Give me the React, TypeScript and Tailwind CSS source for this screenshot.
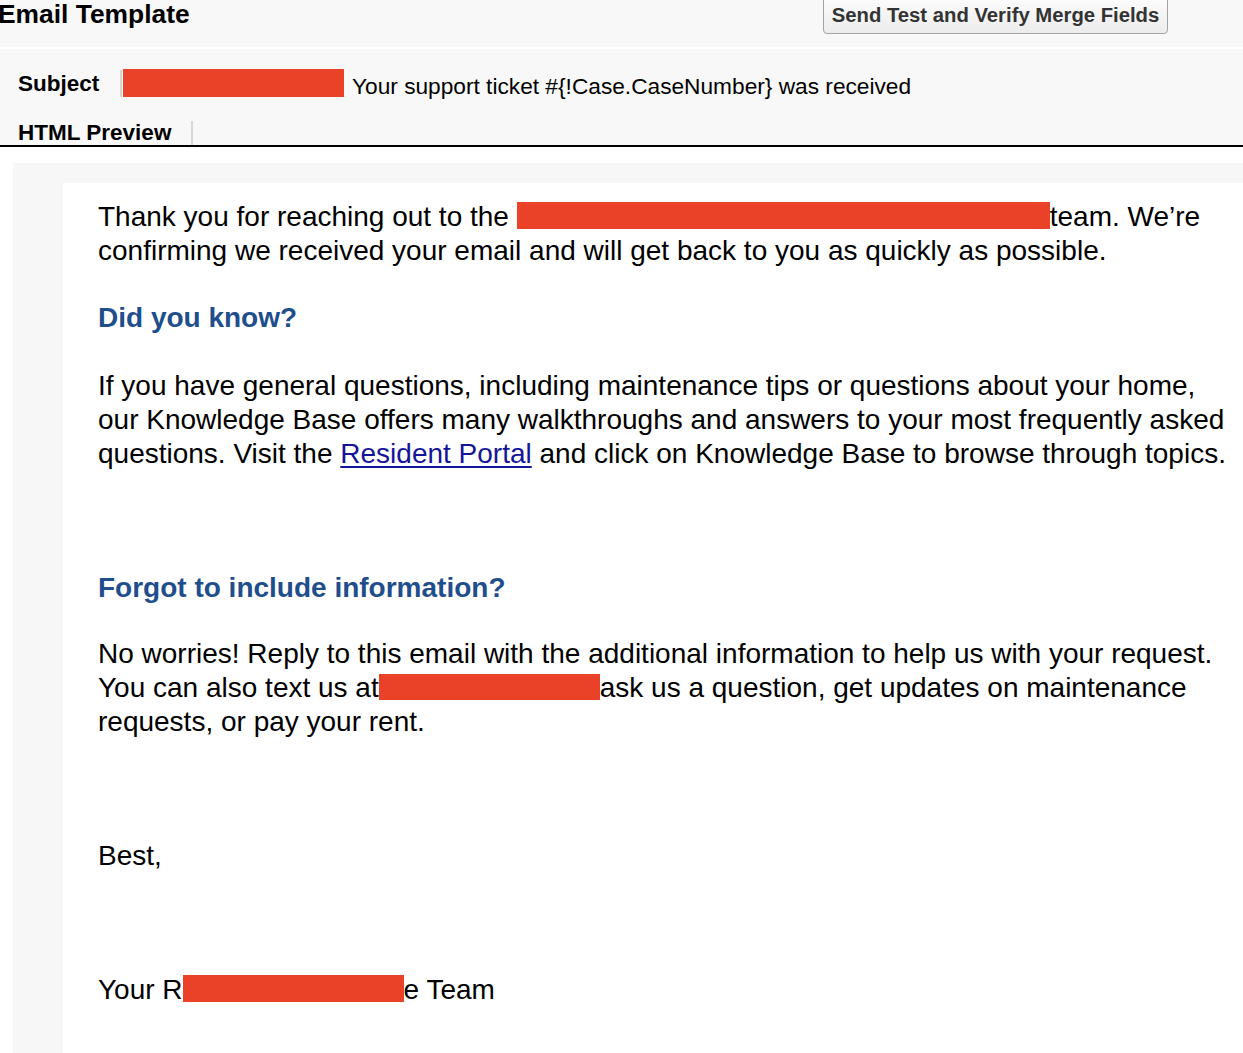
import React from "react";

function Red({ w, h = 27 }: { w: number; h?: number }) {
  return (
    <span
      className="inline-block bg-[#ea4129] align-[-3px]"
      style={{ width: w, height: h }}
    />
  );
}

export default function App() {
  return (
    <div
      className="w-[1243px] h-[1053px] overflow-hidden bg-white text-black"
      style={{ fontFamily: '"Liberation Sans", Arial, sans-serif' }}
    >
      {/* header */}
      <div className="h-[47px] bg-[#f8f8f8] flex items-start pt-[1px]">
        <div className="ml-[-2px] text-[26.4px] leading-[26px] font-bold text-black">
          Email Template
        </div>
        <button className="ml-auto mr-[75px] mt-[-9px] h-[42px] w-[345px] flex items-start justify-center pt-[12px] border border-[#a3a3a3] rounded-[4px] bg-gradient-to-b from-[#ffffff] to-[#ececec] text-[20.3px] leading-[20px] font-bold text-[#333333]">
          Send Test and Verify Merge Fields
        </button>
      </div>
      <div className="h-[2px] bg-white" />
      {/* subject area */}
      <div className="bg-[#f8f8f8] pt-[20px] border-b-2 border-black">
        <div className="flex items-start pl-[18px] h-[28px]">
          <div className="w-[102px] text-[22.5px] leading-[28px] font-bold pt-[1px]">
            Subject
          </div>
          <div className="w-[2px] h-[27px] mt-[1px] bg-[#d6d6d6]" />
          <div className="ml-[1px] w-[221px] h-[28px] bg-[#ea4129]" />
          <div className="ml-[8px] text-[22.7px] leading-[28px] pt-[3px] whitespace-nowrap">
            Your support ticket #{"{"}!Case.CaseNumber{"}"} was received
          </div>
        </div>
        <div className="flex items-start pl-[18px] mt-[24px] h-[24px]">
          <div className="w-[173px] text-[22.5px] leading-[24px] font-bold">
            HTML Preview
          </div>
          <div className="w-[2px] h-[24px] bg-[#d6d6d6]" />
        </div>
      </div>
      {/* preview */}
      <div className="mt-[16px] ml-[13px] bg-[#f7f7f7] pt-[20px] pl-[50px] h-[900px]">
        <div className="bg-white h-full pl-[35px] pt-[17px] text-[28px] leading-[34px] whitespace-nowrap">
          <p>
            Thank you for reaching out to the <Red w={533} />
            team. We’re
            <br />
            confirming we received your email and will get back to you as quickly as possible.
          </p>
          <h2 className="mt-[33px] font-bold text-[#1f4e8d]">Did you know?</h2>
          <p className="mt-[34px]">
            If you have general questions, including maintenance tips or questions about your home,
            <br />
            our Knowledge Base offers many walkthroughs and answers to your most frequently asked
            <br />
            questions. Visit the{" "}
            <a className="text-[#15159a] underline underline-offset-[3px]">Resident Portal</a> and
            click on Knowledge Base to browse through topics.
          </p>
          <h2 className="mt-[100px] font-bold text-[#1f4e8d]">
            Forgot to include information?
          </h2>
          <p className="mt-[32px]">
            No worries! Reply to this email with the additional information to help us with your request.
            <br />
            You can also text us at
            <Red w={221} h={26} />
            ask us a question, get updates on maintenance
            <br />
            requests, or pay your rent.
          </p>
          <p className="mt-[100px]">Best,</p>
          <p className="mt-[100px]">
            Your R<Red w={221} />e Team
          </p>
        </div>
      </div>
    </div>
  );
}
